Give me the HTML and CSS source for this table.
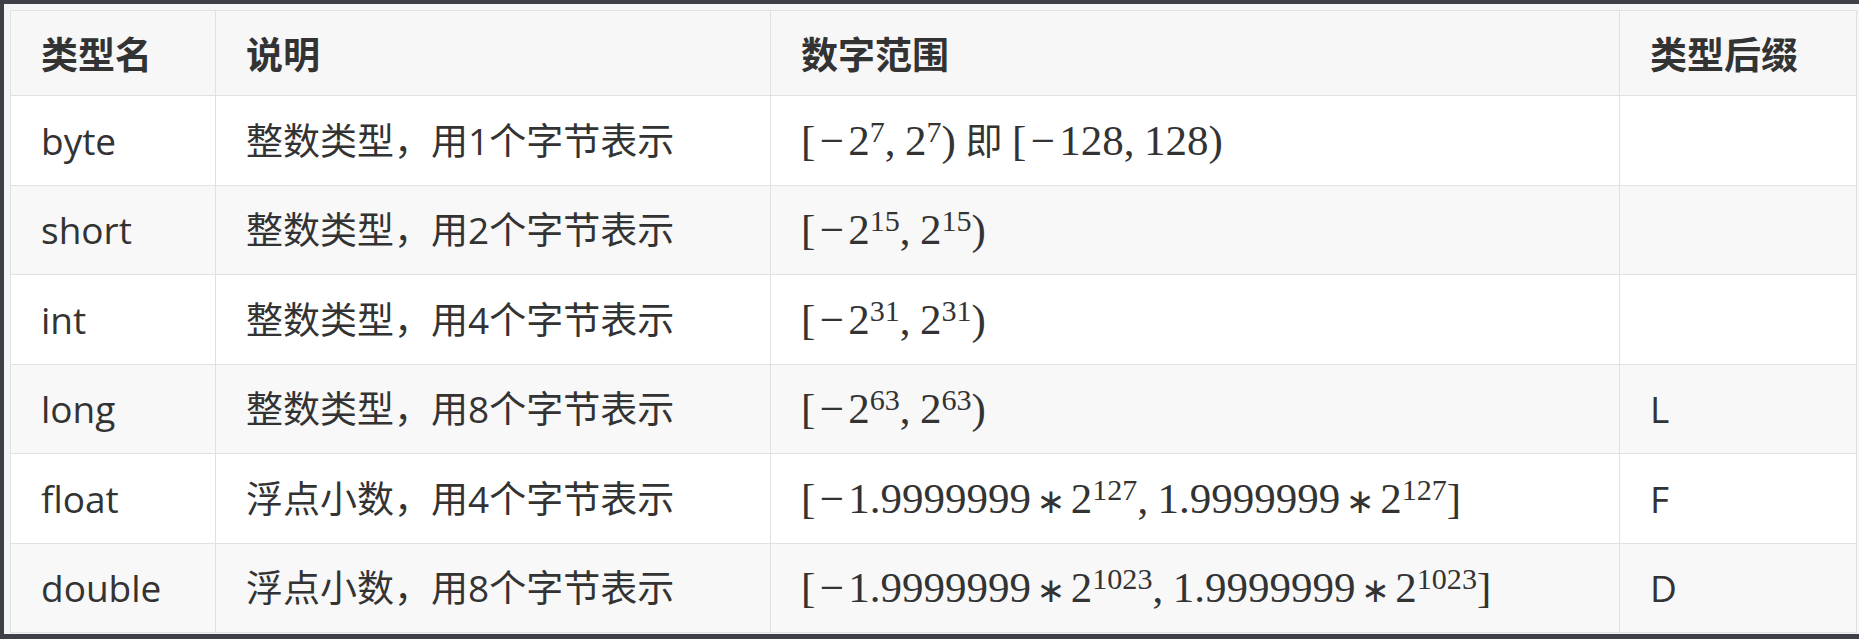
FILE: index.html
```html
<!DOCTYPE html>
<html lang="zh">
<head>
<meta charset="utf-8">
<link rel="stylesheet" href="styles.css">
</head>
<body>
<div class="frame">
  <table class="types">
    <colgroup>
      <col class="c1"><col class="c2"><col class="c3"><col class="c4">
    </colgroup>
    <thead>
      <tr><th>类型名</th><th>说明</th><th>数字范围</th><th>类型后缀</th></tr>
    </thead>
    <tbody>
      <tr>
        <td>byte</td>
        <td>整数类型，用1个字节表示</td>
        <td><span class="m">[<span class="mi">−</span>2<sup>7</sup>,<span class="th"></span>2<sup>7</sup>)</span> 即 <span class="m">[<span class="mi">−</span>128,<span class="th"></span>128)</span></td>
        <td></td>
      </tr>
      <tr>
        <td>short</td>
        <td>整数类型，用2个字节表示</td>
        <td><span class="m">[<span class="mi">−</span>2<sup>15</sup>,<span class="th"></span>2<sup>15</sup>)</span></td>
        <td></td>
      </tr>
      <tr>
        <td>int</td>
        <td>整数类型，用4个字节表示</td>
        <td><span class="m">[<span class="mi">−</span>2<sup>31</sup>,<span class="th"></span>2<sup>31</sup>)</span></td>
        <td></td>
      </tr>
      <tr>
        <td>long</td>
        <td>整数类型，用8个字节表示</td>
        <td><span class="m">[<span class="mi">−</span>2<sup>63</sup>,<span class="th"></span>2<sup>63</sup>)</span></td>
        <td>L</td>
      </tr>
      <tr>
        <td>float</td>
        <td>浮点小数，用4个字节表示</td>
        <td><span class="m">[<span class="mi">−</span>1.9999999<span class="op">∗</span>2<sup>127</sup>,<span class="th"></span>1.9999999<span class="op">∗</span>2<sup>127</sup>]</span></td>
        <td>F</td>
      </tr>
      <tr>
        <td>double</td>
        <td>浮点小数，用8个字节表示</td>
        <td><span class="m">[<span class="mi">−</span>1.9999999<span class="op">∗</span>2<sup>1023</sup>,<span class="th"></span>1.9999999<span class="op">∗</span>2<sup>1023</sup>]</span></td>
        <td>D</td>
      </tr>
    </tbody>
  </table>
</div>
</body>
</html>
```

FILE: styles.css
```css
html, body {
  margin: 0;
  padding: 0;
  background: #3d4046;
  height: 639px;
  overflow: hidden;
}

.frame {
  margin: 4px 0 0 4px;
  padding: 6px 3px 1px 6px;
  background: #f4f5f6;
  height: 623px;
}

.types {
  border-collapse: collapse;
  width: 1846px;
  table-layout: fixed;
  font-family: "Open Sans", "Noto Sans CJK SC", sans-serif;
  font-size: 37px;
  color: #333333;
}

.c1 { width: 205px; }
.c2 { width: 555px; }
.c3 { width: 849px; }
.c4 { width: 237px; }

.types th,
.types td {
  border: 1px solid #dfe2e5;
  padding: 0 30px;
  text-align: left;
  vertical-align: middle;
  white-space: nowrap;
  line-height: 1;
}

.types th {
  height: 84px;
  font-weight: bold;
  font-family: "Noto Sans CJK SC", sans-serif;
  background: #f7f7f7;
}

.types td {
  height: 88.5px;
}

.types tbody tr {
  background: #ffffff;
}

.types tbody tr:nth-child(2n) {
  background: #f8f8f8;
}

.m {
  font-family: "Liberation Serif", "DejaVu Serif", serif;
  font-size: 43px;
  color: #333333;
}

.m sup {
  font-size: 0.7em;
  line-height: 0;
  vertical-align: 0.42em;
}

.mi {
  display: inline-block;
  padding: 0 0.1em 0 0.1em;
}

.th {
  display: inline-block;
  width: 0.22em;
}

.op {
  display: inline-block;
  margin: 0 0.16em;
  font-family: "DejaVu Sans", sans-serif;
  font-size: 0.8em;
}
```
